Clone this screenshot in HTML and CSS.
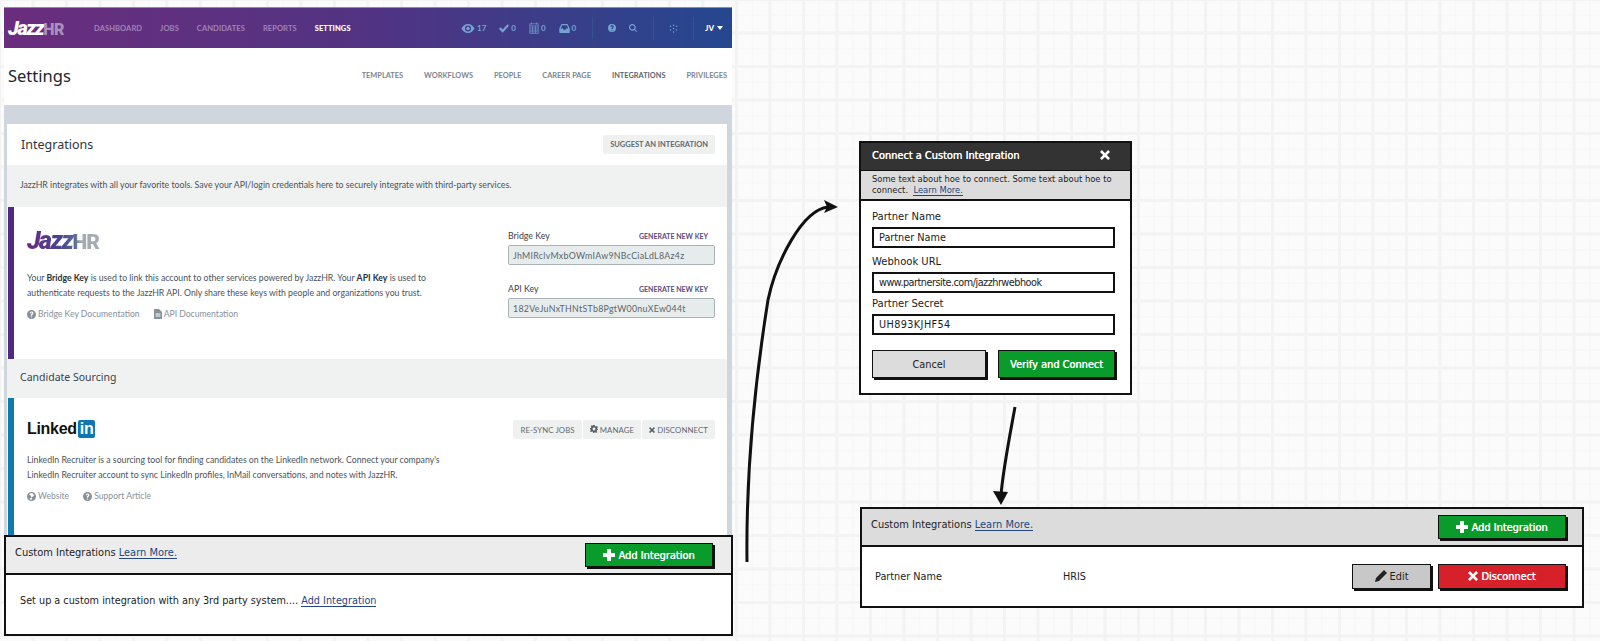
FILE: index.html
```html
<!DOCTYPE html>
<html lang="en">
<head>
    <meta charset="UTF-8">
    <title>JazzHR Custom Integrations</title>
    <link rel="stylesheet" href="styles.css">
</head>
<body>
    <div class="app">
        <nav class="topnav">
            <span class="logo">Jazz<span class="logo-hr">HR</span></span>
            <div class="nav-links">
                <a>DASHBOARD</a>
                <a>JOBS</a>
                <a>CANDIDATES</a>
                <a>REPORTS</a>
                <a class="active">SETTINGS</a>
            </div>
            <div class="nav-stats">
                <span class="stat">
                    <svg class="ic" width="14" height="9" viewBox="0 0 16 11"><path d="M8 0C4.500 0 1.600 2.200 0 5.500 1.600 8.800 4.500 11 8 11s6.400-2.200 8-5.500C14.400 2.200 11.500 0 8 0zm0 9.200a3.700 3.700 0 1 1 0-7.400 3.700 3.700 0 0 1 0 7.400z"/><circle cx="8" cy="5.500" r="2.200"/></svg>17
                </span>
                <span class="stat">
                    <svg class="ic" width="10" height="9" viewBox="0 0 13 11"><path d="M0 6l2-2 2.800 2.800L11 0l2 2-8.200 9z"/></svg>0
                </span>
                <span class="stat">
                    <svg class="cal" width="10" height="12" viewBox="0 0 13 17"><path d="M.5 2.500h12v14H.5zM.5 5.500h12M3 .5v3M10 .5v3M.5 8.500h12M.5 11.500h12M.5 14h12M4.500 5.500v11M8.500 5.500v11"/></svg>0
                </span>
                <span class="stat">
                    <svg class="ic" width="11" height="9" viewBox="0 0 14 12"><path d="M3 0h8l3 6v5a1 1 0 0 1-1 1H1a1 1 0 0 1-1-1V6zm.8 1.500L2 6h3l1 2h2l1-2h3l-1.800-4.500z" fill-rule="evenodd"/></svg>0
                </span>
            </div>
            <div class="nav-tools">
                <svg class="ic" width="8" height="8" viewBox="0 0 11 11"><path fill-rule="evenodd" d="M5.500 0a5.500 5.500 0 1 1 0 11 5.500 5.500 0 0 1 0-11zM4.800 8v1.300h1.400V8zM3.500 4h1.300c0-.6.300-1 .8-1s.7.300.7.700c0 .8-1.500 1-1.500 2.500V7h1.400c0-1.200 1.600-1.400 1.600-3.300C7.800 2.600 6.900 1.800 5.600 1.800 4.300 1.800 3.500 2.700 3.500 4z"/></svg>
                <svg class="ic" width="8" height="8" viewBox="0 0 12 12"><path fill-rule="evenodd" d="M5 0a5 5 0 0 1 4 8l3 3-1 1-3-3A5 5 0 1 1 5 0zm0 1.700a3.300 3.300 0 1 0 0 6.600 3.300 3.300 0 0 0 0-6.600z"/></svg>
            </div>
            <div class="nav-apps">
                <svg class="ic" width="9" height="9" viewBox="0 0 12 12"><circle cx="2" cy="3" r="1"/><circle cx="6" cy="1.500" r="1"/><circle cx="10" cy="3" r="1"/><circle cx="2" cy="8" r="1"/><circle cx="6" cy="6" r="1"/><circle cx="10" cy="8" r="1"/><circle cx="6" cy="10.500" r="1"/></svg>
            </div>
            <div class="nav-user">JV <span class="caret"></span></div>
        </nav>

        <header class="page-head">
            <h1>Settings</h1>
            <div class="subnav">
                <a>TEMPLATES</a>
                <a>WORKFLOWS</a>
                <a>PEOPLE</a>
                <a>CAREER PAGE</a>
                <a class="current">INTEGRATIONS</a>
                <a>PRIVILEGES</a>
            </div>
        </header>

        <main class="band">
            <section class="card">
                <div class="card-head">
                    <h2>Integrations</h2>
                    <button class="btn-flat">SUGGEST AN INTEGRATION</button>
                </div>
                <div class="intro">JazzHR integrates with all your favorite tools. Save your API/login credentials here to securely integrate with third-party services.</div>

                <div class="row row-jazz">
                    <div class="row-main">
                        <div class="jazz-logo">Jazz<span>HR</span></div>
                        <p class="desc">Your <b>Bridge Key</b> is used to link this account to other services powered by JazzHR. Your <b>API Key</b> is used to<br>authenticate requests to the JazzHR API. Only share these keys with people and organizations you trust.</p>
                        <div class="doc-links">
                            <a><svg class="doc" width="9" height="9" viewBox="0 0 11 11"><path fill-rule="evenodd" d="M5.500 0a5.500 5.500 0 1 1 0 11 5.500 5.500 0 0 1 0-11zM4.800 8v1.300h1.400V8zM3.500 4h1.300c0-.6.300-1 .8-1s.7.300.7.700c0 .8-1.500 1-1.500 2.500V7h1.400c0-1.200 1.600-1.400 1.600-3.300C7.800 2.600 6.900 1.800 5.600 1.800 4.300 1.800 3.500 2.700 3.500 4z"/></svg> Bridge Key Documentation</a>
                            <a><svg class="doc" width="8" height="10" viewBox="0 0 8 10"><path fill-rule="evenodd" d="M0 0h5l3 3v7H0zm1.500 4.500v1h5v-1zm0 2v1h5v-1z"/></svg> API Documentation</a>
                        </div>
                    </div>
                    <div class="keys">
                        <div class="key-head"><label>Bridge Key</label><a>GENERATE NEW KEY</a></div>
                        <div class="key-box">JhMIRclvMxbOWmIAw9NBcCiaLdL8Az4z</div>
                        <div class="key-head key-second"><label>API Key</label><a>GENERATE NEW KEY</a></div>
                        <div class="key-box">182VeJuNxTHNtSTb8PgtW00nuXEw044t</div>
                    </div>
                </div>

                <div class="section-title">Candidate Sourcing</div>

                <div class="row row-linkedin">
                    <div class="row-main">
                        <div class="li-logo">Linked<span>in</span></div>
                        <p class="desc li-desc">LinkedIn Recruiter is a sourcing tool for finding candidates on the LinkedIn network. Connect your company's LinkedIn Recruiter account to sync LinkedIn profiles, InMail conversations, and notes with JazzHR.</p>
                        <div class="doc-links">
                            <a><svg class="doc" width="9" height="9" viewBox="0 0 10 10"><path fill-rule="evenodd" d="M5 0a5 5 0 1 1 0 10A5 5 0 0 1 5 0zM2 2.500l2 1.500 1 2 1.500-1L8 3.500 6 1.500H4zM3 7l1 2 2-1-1-1.500z"/></svg> Website</a>
                            <a><svg class="doc" width="9" height="9" viewBox="0 0 11 11"><path fill-rule="evenodd" d="M5.500 0a5.500 5.500 0 1 1 0 11 5.500 5.500 0 0 1 0-11zM4.800 8v1.300h1.400V8zM3.500 4h1.300c0-.6.300-1 .8-1s.7.300.7.700c0 .8-1.500 1-1.500 2.500V7h1.400c0-1.200 1.600-1.400 1.600-3.300C7.800 2.600 6.900 1.800 5.600 1.800 4.300 1.800 3.500 2.700 3.500 4z"/></svg> Support Article</a>
                        </div>
                    </div>
                    <div class="li-actions">
                        <button class="btn-flat btn-sm">RE-SYNC JOBS</button>
                        <button class="btn-flat btn-sm"><svg class="btn-ic" width="8" height="8" viewBox="0 0 10 10"><path fill-rule="evenodd" d="M4 0h2l.3 1.500 1.100.5L8.700 1.200l1.200 1.400L9 3.800l.4 1.100L10 5v1l-1.200.4-.5 1.100.8 1.200-1.300 1.200-1.200-.8-1.100.4L5 10H4l-.4-1.500-1.100-.4-1.200.8L0 7.700l.8-1.200L.4 5.400 0 5V4l1.200-.3.500-1.100L.9 1.400 2.200.2l1.200.8zM5 3.200a1.800 1.800 0 1 0 0 3.600 1.800 1.800 0 0 0 0-3.600z"/></svg> MANAGE</button>
                        <button class="btn-flat btn-sm"><svg class="btn-ic" width="6" height="6" viewBox="0 0 8 8"><path d="M1.500 0L4 2.500 6.500 0 8 1.500 5.500 4 8 6.500 6.500 8 4 5.500 1.500 8 0 6.500 2.500 4 0 1.500z"/></svg> DISCONNECT</button>
                    </div>
                </div>
            </section>
        </main>
    </div>

    <section class="sk-panel sk-panel-left">
        <div class="sk-head">
            <span class="sk-title">Custom Integrations <a class="sk-link">Learn More.</a></span>
            <button class="sk-btn sk-green sk-add"><svg width="12" height="12" viewBox="0 0 12 12"><path d="M4 0h4v4h4v4H8v4H4V8H0V4h4z"/></svg> Add Integration</button>
        </div>
        <div class="sk-body sk-setup">Set up a custom integration with any 3rd party system.... <a class="sk-link">Add Integration</a></div>
    </section>

    <svg class="arrows" width="1600" height="641" viewBox="0 0 1600 641">
        <path class="arrow-line" d="M747 562C746 480 752 400 768 300C776 262 802 210 828 207"/>
        <path class="arrow-tip" d="M838 207L824 200 827 207 824 213z"/>
        <path class="arrow-line" d="M1015 407C1009 440 1003 470 1001 495"/>
        <path class="arrow-tip" d="M1001 505L993 491 1008 492z"/>
    </svg>

    <section class="modal">
        <div class="modal-title"><span>Connect a Custom Integration</span><svg width="10" height="10" viewBox="0 0 8 8"><path d="M1.500 0L4 2.500 6.500 0 8 1.500 5.500 4 8 6.500 6.500 8 4 5.500 1.500 8 0 6.500 2.500 4 0 1.500z"/></svg></div>
        <div class="modal-info">Some text about hoe to connect. Some text about hoe to<br>connect. &nbsp;<a class="sk-link">Learn More.</a></div>
        <form class="modal-form">
            <label>Partner Name</label>
            <div class="sk-input">Partner Name</div>
            <label>Webhook URL</label>
            <div class="sk-input sk-input-url">www.partnersite.com/jazzhrwebhook</div>
            <label>Partner Secret</label>
            <div class="sk-input sk-input-code">UH893KJHF54</div>
            <div class="modal-actions">
                <button type="button" class="sk-btn sk-grey">Cancel</button>
                <button type="button" class="sk-btn sk-green">Verify and Connect</button>
            </div>
        </form>
    </section>

    <section class="sk-panel sk-panel-right">
        <div class="sk-head">
            <span class="sk-title">Custom Integrations <a class="sk-link">Learn More.</a></span>
            <button class="sk-btn sk-green sk-add"><svg width="12" height="12" viewBox="0 0 12 12"><path d="M4 0h4v4h4v4H8v4H4V8H0V4h4z"/></svg> Add Integration</button>
        </div>
        <div class="sk-body sk-row">
            <span class="partner-name">Partner Name</span>
            <span class="partner-type">HRIS</span>
            <button class="sk-btn sk-silver sk-edit"><svg width="12" height="12" viewBox="0 0 12 12"><path d="M9 0l3 3-8 8-4 1 1-4z"/></svg> Edit</button>
            <button class="sk-btn sk-red sk-disc"><svg width="10" height="10" viewBox="0 0 8 8"><path d="M1.500 0L4 2.500 6.500 0 8 1.500 5.500 4 8 6.500 6.500 8 4 5.500 1.500 8 0 6.500 2.500 4 0 1.500z"/></svg> Disconnect</button>
        </div>
    </section>
</body>
</html>
```

FILE: styles.css
```css
* {
    box-sizing: border-box;
}

html, body {
    margin: 0;
    height: 641px;
    overflow: hidden;
}

body {
    position: relative;
    font-family: 'Lato', sans-serif;
    color: #3d4650;
    background-color: #fbfbfb;
    background-image:
        linear-gradient(#f3f3f3 3px, transparent 3px),
        linear-gradient(90deg, #f3f3f3 3px, transparent 3px),
        linear-gradient(#f7f7f7 1px, transparent 1px),
        linear-gradient(90deg, #f7f7f7 1px, transparent 1px);
    background-size: 33.5px 33.5px, 33.5px 33.5px, 16.75px 16.75px, 16.75px 16.75px;
    background-position: -2px -2px;
}

a {
    text-decoration: none;
}

button {
    font-family: inherit;
    border: none;
    cursor: pointer;
}

/* left: the real app screenshot */
.app {
    position: absolute;
    left: 4px;
    top: 7px;
    width: 728px;
    height: 560px;
    background: #fff;
}

.topnav {
    display: flex;
    align-items: center;
    height: 41px;
    padding-left: 4px;
    border-top: 1px solid #8d8d92;
    background: linear-gradient(90deg, #6b2d7d 0%, #523383 50%, #24478f 100%);
    font-size: 7.500px;
    font-weight: 700;
}

.logo {
    width: 86px;
    color: #fff;
    font-family: 'Roboto', sans-serif;
    font-size: 20px;
    font-weight: 900;
    font-style: italic;
    letter-spacing: -1.500px;
}

.logo-hr {
    color: #a98fbb;
    font-style: normal;
    font-size: 16px;
    letter-spacing: -.5px;
}

.nav-links {
    display: flex;
    gap: 18px;
    width: 367px;
    color: #a283b8;
    letter-spacing: .1px;
}

.nav-links .active {
    color: #fff;
    font-weight: 900;
}

.nav-stats {
    display: flex;
    gap: 13px;
    align-items: center;
    width: 131px;
    color: #74a3cf;
    font-size: 8px;
}

.stat {
    display: flex;
    align-items: center;
    gap: 2px;
}

.ic {
    fill: #74a3cf;
}

.cal {
    fill: none;
    stroke: #74a3cf;
    stroke-width: .9;
}

.nav-tools, .nav-apps, .nav-user {
    display: flex;
    align-items: center;
    height: 22px;
    border-left: 1px solid #33528f;
}

.nav-tools {
    gap: 13px;
    width: 61px;
    padding-left: 15px;
}

.nav-apps {
    width: 40px;
    padding-left: 15px;
}

.nav-user {
    flex: 1;
    padding-left: 11px;
    gap: 3px;
    color: #fff;
    font-weight: 900;
    font-size: 8px;
}

.caret {
    width: 0;
    height: 0;
    border: 3px solid transparent;
    border-top: 4px solid #fff;
    border-bottom: 0;
}

.page-head {
    display: flex;
    align-items: center;
    justify-content: space-between;
    height: 57px;
    padding: 0 5px 2px 4px;
}

.page-head h1 {
    margin: 0;
    font-size: 16.500px;
    font-weight: 400;
    color: #20262c;
    font-family: 'Noto Sans', sans-serif;
}

.subnav {
    display: flex;
    gap: 21px;
    font-size: 7.400px;
    font-weight: 700;
    color: #7d868f;
}

.subnav .current {
    color: #5b6670;
}

.band {
    height: 462px;
    padding: 19px 5px 0 3px;
    background: #cfd6dd;
}

.card {
    background: #fff;
}

.card-head {
    display: flex;
    align-items: center;
    justify-content: space-between;
    height: 41px;
    padding: 0 12px 0 14px;
}

.card-head h2 {
    margin: 0;
    font-size: 12.500px;
    font-weight: 400;
    color: #2f363d;
    font-family: 'Noto Sans', sans-serif;
}

.btn-flat {
    height: 19px;
    padding: 0 7px;
    border-radius: 2px;
    background: #eff1f1;
    color: #5f6a72;
    font-size: 7.500px;
    font-weight: 700;
}

.intro {
    height: 42px;
    padding: 0 13px;
    line-height: 40px;
    background: #f0f2f2;
    font-size: 8.750px;
    color: #4a535b;
}

.row {
    display: flex;
    justify-content: space-between;
    border-left: 6px solid #4e2a84;
    margin-left: 1px;
}

.row-jazz {
    height: 152px;
}

.row-linkedin {
    height: 137px;
    border-left-color: #0f7ab0;
}

.row-main {
    width: 445px;
    padding: 0 0 0 13px;
}

.jazz-logo {
    width: fit-content;
    margin-top: 22px;
    height: 24px;
    line-height: 24px;
    font-family: 'Roboto', sans-serif;
    font-size: 25px;
    font-weight: 900;
    font-style: italic;
    letter-spacing: -1.500px;
    padding-right: 2px;
    background: linear-gradient(90deg, #6b2a80 0%, #47458f 45%, #5a6a96 65%, #a4abb2 72%);
    background-clip: text;
    -webkit-background-clip: text;
    color: transparent;
}

.jazz-logo span {
    font-style: normal;
    font-size: 21px;
    letter-spacing: -1px;
}

.desc {
    margin: 17px 0 0;
    font-size: 8.700px;
    line-height: 15px;
    color: #4a535b;
}

.desc b {
    color: #2a3138;
}

.doc-links {
    display: flex;
    gap: 14px;
    margin-top: 9px;
    font-size: 8.600px;
    color: #87919a;
}

.doc-links a {
    display: flex;
    align-items: center;
    gap: 2px;
}

.doc {
    fill: #87919a;
}

.keys {
    width: 207px;
    margin-right: 12px;
    padding-top: 22px;
    font-size: 8.800px;
}

.key-head {
    display: flex;
    justify-content: space-between;
    align-items: center;
    height: 13px;
    padding-right: 7px;
    color: #3a4249;
}

.key-head a {
    font-size: 7px;
    font-weight: 700;
    color: #5a4a80;
}

.key-second {
    margin-top: 17px;
}

.key-box {
    height: 20px;
    margin-top: 3px;
    padding: 0 4px;
    line-height: 19px;
    background: #e6ecec;
    border: 1px solid #a9b3b8;
    border-radius: 2px;
    color: #5a646c;
    font-size: 8.800px;
    letter-spacing: .3px;
}

.section-title {
    height: 39px;
    padding: 0 13px;
    line-height: 37px;
    background: #f0f2f2;
    font-size: 10.500px;
    color: #3a4249;
    font-family: 'Noto Sans', sans-serif;
}

.li-logo {
    margin-top: 22px;
    height: 20px;
    font-family: 'Liberation Sans', sans-serif;
    font-size: 16px;
    font-weight: 700;
    line-height: 18px;
    color: #111;
    letter-spacing: -.3px;
}

.li-logo span {
    display: inline-block;
    margin-left: 1px;
    padding: 0 2px;
    height: 18px;
    background: #0f76b1;
    color: #fff;
    border-radius: 2px;
}

.li-desc {
    margin: 12px 0 2px;
    width: 420px;
}

.li-actions {
    display: flex;
    gap: 1px;
    margin: 22px 12px 0 0;
}

.btn-sm {
    padding: 0 7px;
    font-size: 7.800px;
    font-weight: 400;
    letter-spacing: .1px;
}

.btn-ic {
    fill: #55606a;
}

/* sketch pieces on top */
.sk-panel, .modal {
    position: absolute;
    font-family: 'DejaVu Sans', sans-serif;
    color: #1c1c1c;
    background: #fff;
}

.sk-panel {
    border: 2px solid #111;
}

.sk-panel-left {
    left: 4px;
    top: 535px;
    width: 729px;
    height: 101px;
}

.sk-panel-right {
    left: 860px;
    top: 507px;
    width: 724px;
    height: 101px;
}

.sk-head {
    position: relative;
    height: 38px;
    border-bottom: 2px solid #111;
    background: #dcdcdc;
}

.sk-panel-left .sk-head {
    background: #ececec;
}

.sk-title {
    display: block;
    padding: 10px 0 0 9px;
    font-size: 9.900px;
}

.sk-link {
    color: #22487e;
    border-bottom: 1px solid #22487e;
}

.sk-btn {
    display: flex;
    align-items: center;
    justify-content: center;
    gap: 3px;
    font-size: 9.800px;
    font-weight: 400;
    font-family: inherit;
    white-space: nowrap;
    border: 1px solid #111;
    box-shadow: 2px 2px 0 #111;
    text-shadow: .35px 0 0 currentColor;
}

.sk-btn svg {
    fill: #fff;
}

.sk-green {
    background: #0a9c2a;
    color: #fff;
}

.sk-add {
    position: absolute;
    top: 6px;
    right: 18px;
    width: 128px;
    height: 24px;
}

.sk-panel-right .sk-add {
    right: 16px;
}

.sk-setup {
    padding: 20px 14px;
    font-size: 9.700px;
}

.modal {
    left: 859px;
    top: 141px;
    width: 273px;
    height: 254px;
    border: 2px solid #111;
}

.modal-title {
    display: flex;
    align-items: center;
    justify-content: space-between;
    height: 27px;
    padding: 0 20px 3px 11px;
    background: #333;
    color: #fff;
    font-size: 9.800px;
    text-shadow: .35px 0 0 currentColor;
}

.modal-title svg {
    fill: #fff;
}

.modal-info {
    height: 31px;
    padding: 3px 11px 0;
    background: #dcdcdc;
    border-top: 1px solid #111;
    border-bottom: 2px solid #111;
    font-size: 8.400px;
    line-height: 11px;
}

.modal-form {
    padding: 9px 15px 0 11px;
}

.modal-form label {
    display: block;
    height: 14px;
    font-size: 10px;
    line-height: 14px;
}

.sk-input {
    height: 21px;
    margin: 3px 0 7px;
    padding: 0 5px;
    line-height: 17px;
    border: 2px solid #111;
    font-size: 9.700px;
}

.sk-input-url {
    margin-bottom: 4px;
    letter-spacing: -.5px;
}

.sk-input-code {
    letter-spacing: .4px;
}

.modal-actions {
    display: flex;
    gap: 12px;
    margin-top: 15px;
}

.modal-actions .sk-btn {
    height: 28px;
}

.sk-grey {
    width: 114px;
    background: #dcdcdc;
    color: #222;
    text-shadow: none;
}

.modal-actions .sk-green {
    flex: 1;
}

.sk-row {
    display: flex;
    align-items: center;
    height: 60px;
    padding: 0 16px 2px 13px;
    font-size: 9.700px;
}

.partner-name {
    width: 188px;
}

.partner-type {
    flex: 1;
}

.sk-silver {
    width: 79px;
    height: 25px;
    margin-right: 7px;
    background: #c8c8c8;
    color: #222;
    text-shadow: none;
}

.sk-silver svg {
    fill: #222;
}

.sk-red {
    width: 128px;
    height: 25px;
    background: #d6202a;
    color: #fff;
}

.arrows {
    position: absolute;
    left: 0;
    top: 0;
}

.arrow-line {
    fill: none;
    stroke: #111;
    stroke-width: 3;
}

.arrow-tip {
    fill: #111;
}
```
